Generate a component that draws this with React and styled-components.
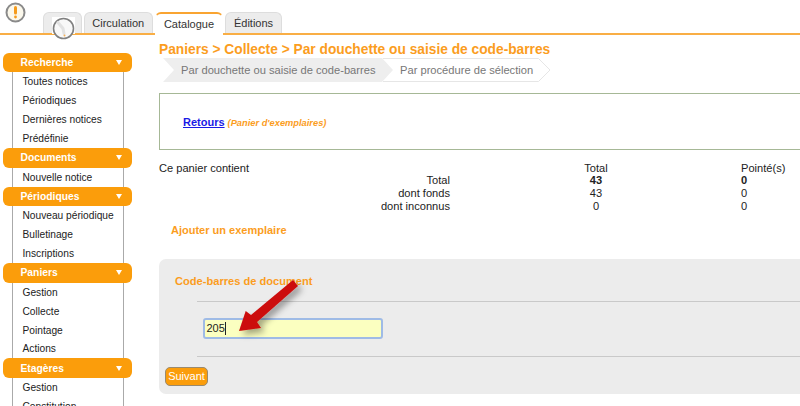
import React from 'react';
import styled, { createGlobalStyle } from 'styled-components';

const GlobalStyle = createGlobalStyle`
  html, body {
    margin: 0;
    padding: 0;
    background: #fff;
    overflow: hidden;
  }
  body {
    font-family: "Liberation Sans", Arial, sans-serif;
    font-size: 11px;
    color: #222;
  }
`;

const Page = styled.div`
  position: relative;
  width: 800px;
  height: 406px;
  overflow: hidden;
`;

const Header = styled.div`
  position: relative;
  height: 33px;
  padding-left: 42.5px;
  display: flex;
  align-items: flex-end;
  gap: 2px;
  border-bottom: 2px solid #f9ae45;
`;

const AlertBadge = styled.div`
  position: absolute;
  left: 5px;
  top: 2px;
  width: 21px;
  height: 21px;
`;

const Tab = styled.div`
  height: ${p => (p.$active ? 23 : 21)}px;
  width: ${p => p.$w}px;
  box-sizing: border-box;
  padding-bottom: ${p => (p.$active ? 2 : 0)}px;
  display: flex;
  align-items: center;
  justify-content: center;
  font-size: 11px;
  color: #333;
  border-radius: 6px 6px 0 0;
  background: ${p => (p.$active ? '#fff' : '#ececec')};
  border: 1px solid ${p => (p.$active ? '#fff' : '#ddd')};
  border-bottom: 0;
  border-top: ${p => (p.$active ? '2px solid #f9a431' : '1px solid #ddd')};
  margin-bottom: ${p => (p.$active ? '-2px' : '0')};
  position: relative;
`;

const ClockIcon = styled.div`
  position: absolute;
  left: 8px;
  top: 4px;
  width: 23px;
  height: 23px;
`;

const Body = styled.div`
  display: flex;
  align-items: flex-start;
`;

const Sidebar = styled.nav`
  width: 132px;
  flex: none;
  margin-top: 17.5px;
  margin-left: 3px;
`;

const MenuHead = styled.div`
  height: 19.9px;
  width: 129px;
  box-sizing: border-box;
  padding: 0 10px 0 17.5px;
  border-radius: 6px;
  background: #fb9d0b;
  color: #fff;
  font-weight: bold;
  font-size: 10.3px;
  display: flex;
  align-items: center;
  justify-content: space-between;
`;

const Caret = styled.span`
  width: 0;
  height: 0;
  border-left: 3.5px solid transparent;
  border-right: 3.5px solid transparent;
  border-top: 5px solid #fff;
`;

const MenuList = styled.ul`
  list-style: none;
  margin: 0 0 0 9px;
  padding: 0;
  width: 112px;
  box-sizing: border-box;
  border-left: 1px solid #aaa;
  border-right: 1px solid #aaa;
`;

const MenuItem = styled.li`
  height: 18.85px;
  box-sizing: border-box;
  line-height: 18.85px;
  padding: 1px 0 0 9.5px;
  font-size: 10.2px;
  color: #222;
  white-space: nowrap;
`;

const Main = styled.main`
  flex: none;
  width: 641px;
  margin-left: 24px;
  padding-top: 7px;
`;

const Title = styled.h1`
  margin: 0;
  height: 16px;
  line-height: 16px;
  font-size: 13.75px;
  font-weight: bold;
  color: #fb9d1e;
  white-space: nowrap;
`;

const Steps = styled.div`
  display: flex;
  height: 24px;
  margin-left: 4px;
`;

const Step = styled.div`
  position: relative;
  z-index: ${p => p.$z};
  height: 24px;
  flex: none;
  width: ${p => p.$w}px;
  margin-left: ${p => p.$overlap || 0}px;
  font-size: 11.15px;
  line-height: 24px;
  color: #777;
  padding-left: ${p => p.$pad}px;
  box-sizing: border-box;
  white-space: nowrap;
`;

const StepShape = styled.svg`
  position: absolute;
  left: 0;
  top: 0;
  z-index: -1;
`;

const ReturnBox = styled.div`
  height: 57px;
  margin-top: 11px;
  box-sizing: border-box;
  border: 1px solid #a6b896;
  border-right: 0;
  padding-left: 23px;
  display: flex;
  align-items: center;
  gap: 3px;
`;

const BackLink = styled.a`
  color: #1a1ae6;
  font-weight: bold;
  font-size: 11px;
  text-decoration: underline;
`;

const BackNote = styled.span`
  color: #fb9d1e;
  font-weight: bold;
  font-style: italic;
  font-size: 9.3px;
  position: relative;
  top: 1px;
`;

const CountTable = styled.div`
  display: grid;
  grid-template-columns: 291px 110px 72px 1fr;
  margin-top: 11.5px;
  font-size: 11.1px;
  line-height: 12.8px;
`;

const Label = styled.div`
  text-align: ${p => (p.$left ? 'left' : 'right')};
`;

const Num = styled.div`
  text-align: center;
  font-weight: ${p => (p.$bold ? 'bold' : 'normal')};
`;

const PointedNum = styled.div`
  padding-left: 109px;
  font-weight: ${p => (p.$bold ? 'bold' : 'normal')};
`;

const SectionTitle = styled.h2`
  margin: 9px 0 0 12px;
  height: 16px;
  line-height: 16px;
  font-size: 11px;
  font-weight: bold;
  color: #fb9d1e;
`;

const FormPanel = styled.section`
  height: 135px;
  margin-top: 21px;
  background: #ececec;
  border-radius: 7px 0 0 7px;
  box-sizing: border-box;
  padding: 15px 0 0 6px;
`;

const FieldLabel = styled.div`
  height: 14px;
  line-height: 14px;
  margin-left: 10px;
  margin-bottom: 13px;
  font-size: 11.1px;
  font-weight: bold;
  color: #fb9d1e;
`;

const Rule = styled.div`
  height: 1px;
  margin-left: 32px;
  background: #c9c9c9;
`;

const FieldRow = styled.div`
  height: 54px;
  margin-left: 38px;
  display: flex;
  align-items: center;
`;

const CodeInput = styled.div`
  width: 180px;
  height: 21px;
  box-sizing: border-box;
  border: 2px solid #9fbbe6;
  border-radius: 3px;
  background: #fbffc0;
  font-size: 11px;
  line-height: 17px;
  padding-left: 1.5px;
  color: #222;
`;

const Cursor = styled.span`
  display: inline-block;
  width: 1px;
  height: 13px;
  background: #222;
  vertical-align: -3px;
`;

const SubmitButton = styled.button`
  display: block;
  width: 43px;
  height: 19px;
  padding: 0;
  margin: 10px 0 0;
  box-sizing: border-box;
  border: 1px solid #9a8a6e;
  border-radius: 5px;
  background: #fb9d0b;
  color: #fff;
  font-family: inherit;
  font-size: 11px;
`;

const ArrowOverlay = styled.svg`
  position: absolute;
  left: 230px;
  top: 270px;
  pointer-events: none;
`;

const menus = [
  { title: 'Recherche', items: ['Toutes notices', 'Périodiques', 'Dernières notices', 'Prédéfinie'] },
  { title: 'Documents', items: ['Nouvelle notice'] },
  { title: 'Périodiques', items: ['Nouveau périodique', 'Bulletinage', 'Inscriptions'] },
  { title: 'Paniers', items: ['Gestion', 'Collecte', 'Pointage', 'Actions'] },
  { title: 'Etagères', items: ['Gestion', 'Constitution'] },
];

const counts = [
  ['Total', '43', '0', true],
  ['dont fonds', '43', '0', false],
  ['dont inconnus', '0', '0', false],
];

const App = () => (
  <Page>
    <GlobalStyle />
    <Header>
      <AlertBadge>
        <svg width="21" height="21" viewBox="0 0 21 21">
          <circle cx="10.5" cy="10.5" r="9" fill="#fbf8ec" stroke="#8a8a8a" strokeWidth="2" />
          <path d="M10.5 5.5v5.5" stroke="#f59b1c" strokeWidth="3" strokeLinecap="round" />
          <circle cx="10.5" cy="15" r="1.4" fill="#f59b1c" />
        </svg>
      </AlertBadge>
      <Tab $w={39}>
        <ClockIcon>
          <svg width="23" height="23" viewBox="0 0 23 23">
            <rect x="0" y="0" width="23" height="17" fill="#fff" />
            <circle cx="11.5" cy="11.5" r="10" fill="#f8f8f8" stroke="#808080" strokeWidth="1.6" />
            <path d="M6 5.5l5 6 1 5" stroke="#e2e2e2" strokeWidth="3" strokeLinecap="round" fill="none" />
            <circle cx="12.5" cy="18.5" r="1" fill="#f5b056" />
          </svg>
        </ClockIcon>
      </Tab>
      <Tab $w={69.5}>Circulation</Tab>
      <Tab $w={68} $active>Catalogue</Tab>
      <Tab $w={57}>Éditions</Tab>
    </Header>
    <Body>
      <Sidebar>
        {menus.map(menu => (
          <div key={menu.title}>
            <MenuHead>
              {menu.title}
              <Caret />
            </MenuHead>
            <MenuList>
              {menu.items.map(item => (
                <MenuItem key={item}>{item}</MenuItem>
              ))}
            </MenuList>
          </div>
        ))}
      </Sidebar>
      <Main>
        <Title>Paniers &gt; Collecte &gt; Par douchette ou saisie de code-barres</Title>
        <Steps>
          <Step $w={230} $pad={18} $z={2}>
            <StepShape width="230" height="24">
              <polygon points="0,0 219,0 230,12 219,24 0,24 11,12" fill="#eeeeee" />
            </StepShape>
            Par douchette ou saisie de code-barres
          </Step>
          <Step $w={168} $pad={17} $z={1} $overlap={-10}>
            <StepShape width="168" height="24">
              <polyline points="0,0.5 155.5,0.5 167,12 155.5,23.5 0,23.5" fill="#fff" stroke="#e6e6e6" />
            </StepShape>
            Par procédure de sélection
          </Step>
        </Steps>
        <ReturnBox>
          <BackLink href="#">Retours</BackLink>
          <BackNote>(Panier d'exemplaires)</BackNote>
        </ReturnBox>
        <CountTable>
          <Label $left>Ce panier contient</Label>
          <div />
          <Num>Total</Num>
          <PointedNum>Pointé(s)</PointedNum>
          {counts.map(([label, total, pointed, bold]) => (
            <React.Fragment key={label}>
              <Label>{label}</Label>
              <div />
              <Num $bold={bold}>{total}</Num>
              <PointedNum $bold={bold}>{pointed}</PointedNum>
            </React.Fragment>
          ))}
        </CountTable>
        <SectionTitle>Ajouter un exemplaire</SectionTitle>
        <FormPanel>
          <FieldLabel>Code-barres de document</FieldLabel>
          <Rule />
          <FieldRow>
            <CodeInput>205<Cursor /></CodeInput>
          </FieldRow>
          <Rule />
          <SubmitButton>Suivant</SubmitButton>
        </FormPanel>
      </Main>
    </Body>
    <ArrowOverlay width="90" height="80" viewBox="0 0 90 80">
      <defs>
        <filter id="arrowShadow" x="-20%" y="-20%" width="150%" height="150%">
          <feDropShadow dx="4" dy="4" stdDeviation="3" floodColor="#000" floodOpacity="0.35" />
        </filter>
      </defs>
      <path
        d="M63 10 L68 16 L27 52 L31 58 L9 61 L15.7 41 L21 45 Z"
        fill="#cc0a0a"
        filter="url(#arrowShadow)"
      />
    </ArrowOverlay>
  </Page>
);

export default App;
